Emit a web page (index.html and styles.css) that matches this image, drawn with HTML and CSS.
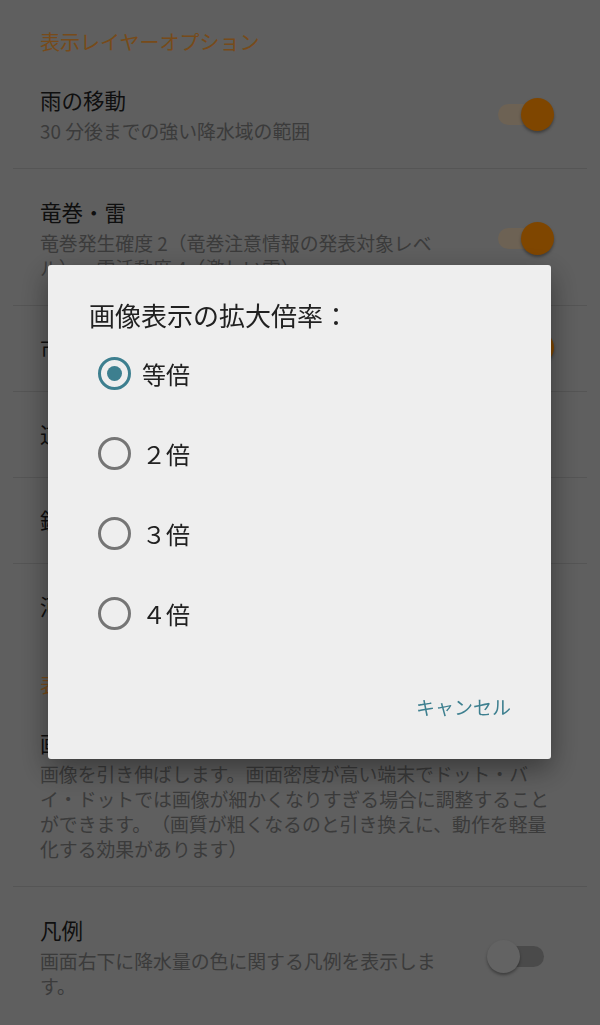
FILE: index.html
```html
<!DOCTYPE html>
<html lang="ja">

<head>
    <meta charset="UTF-8">
    <meta name="viewport" content="width=device-width, initial-scale=1.0">
    <title>表示レイヤーオプション</title>
    <link rel="stylesheet" href="styles.css">
</head>

<body>

    <div class="settings">
        <h2 class="category">表示レイヤーオプション</h2>

        <div class="pref">
            <div class="pref-text">
                <div class="pref-title">雨の移動</div>
                <div class="pref-summary">30 分後までの強い降水域の範囲</div>
            </div>
            <div class="switch on"><span class="track"></span><span class="thumb"></span></div>
        </div>

        <div class="pref">
            <div class="pref-text">
                <div class="pref-title">竜巻・雷</div>
                <div class="pref-summary">竜巻発生確度 2（竜巻注意情報の発表対象レベル）・雷活動度 4（激しい雷）</div>
            </div>
            <div class="switch on"><span class="track"></span><span class="thumb"></span></div>
        </div>

        <div class="pref single">
            <div class="pref-text">
                <div class="pref-title">市町村界</div>
            </div>
            <div class="switch on"><span class="track"></span><span class="thumb"></span></div>
        </div>

        <div class="pref single">
            <div class="pref-text">
                <div class="pref-title">道路</div>
            </div>
            <div class="switch"><span class="track"></span><span class="thumb"></span></div>
        </div>

        <div class="pref single">
            <div class="pref-text">
                <div class="pref-title">鉄道</div>
            </div>
            <div class="switch"><span class="track"></span><span class="thumb"></span></div>
        </div>

        <div class="pref single last">
            <div class="pref-text">
                <div class="pref-title">河川</div>
            </div>
            <div class="switch"><span class="track"></span><span class="thumb"></span></div>
        </div>

        <h2 class="category">表示設定</h2>

        <div class="pref">
            <div class="pref-text wide">
                <div class="pref-title">画像表示の拡大倍率</div>
                <div class="pref-summary">画像を引き伸ばします。画面密度が高い端末でドット・バイ・ドットでは画像が細かくなりすぎる場合に調整することができます。（画質が粗くなるのと引き換えに、動作を軽量化する効果があります）</div>
            </div>
        </div>

        <div class="pref last">
            <div class="pref-text">
                <div class="pref-title">凡例</div>
                <div class="pref-summary">画面右下に降水量の色に関する凡例を表示します。</div>
            </div>
            <div class="switch"><span class="track"></span><span class="thumb"></span></div>
        </div>
    </div>

    <!-- dimmed background behind the dialog -->
    <div class="scrim"></div>

    <div class="dialog">
        <div class="dialog-title">画像表示の拡大倍率：</div>
        <ul class="choices">
            <li class="choice checked"><span class="radio"></span>等倍</li>
            <li class="choice"><span class="radio"></span>２倍</li>
            <li class="choice"><span class="radio"></span>３倍</li>
            <li class="choice"><span class="radio"></span>４倍</li>
        </ul>
        <div class="dialog-buttons">
            <button type="button" class="text-button">キャンセル</button>
        </div>
    </div>

</body>

</html>
```

FILE: styles.css
```css
/* Basic styling */
body {
    margin: 0;
    background: #bebebe;
    font-family: "Noto Sans CJK JP", "Noto Sans", sans-serif;
    color: #1e1e1e;
    text-spacing-trim: space-all;
}

.settings {
    padding-top: 6px;
}

.category {
    margin: 0;
    padding: 21px 0 0 40px;
    font-size: 20px;
    font-weight: normal;
    line-height: 30px;
    color: #ee9634;
}

/* Preference rows */
.pref {
    display: flex;
    align-items: center;
    margin: 0 13px;
    padding: 28px 33px 25px 27px;
    border-bottom: 1px solid #aaaaaa;
}

.pref.single {
    padding-top: 25px;
    padding-bottom: 27px;
}

.pref.last {
    border-bottom: none;
}

.pref-text {
    width: 400px;
}

.pref-text.wide {
    width: 515px;
}

.pref-title {
    font-size: 21.5px;
    line-height: 30px;
    color: #1e1e1e;
}

.pref-summary {
    margin-top: 3px;
    font-size: 18.85px;
    line-height: 25px;
    color: #767676;
}

/* Switch */
.switch {
    position: relative;
    margin-left: auto;
    width: 67px;
    height: 33px;
    flex-shrink: 0;
}

.switch .track {
    position: absolute;
    left: 11px;
    right: 10px;
    top: 6px;
    height: 21px;
    border-radius: 11px;
    background: #949494;
}

.switch .thumb {
    position: absolute;
    left: 0;
    top: 0;
    width: 33px;
    height: 33px;
    border-radius: 50%;
    background: #c6c6c6;
    box-shadow: 0 2px 3px rgba(0, 0, 0, 0.35);
}

.switch.on .track {
    background: #dac4a8;
}

.switch.on .thumb {
    left: 34px;
    background: #ff8c00;
}

/* Modal */
.scrim {
    position: fixed;
    inset: 0;
    background: rgba(0, 0, 0, 0.5);
}

.dialog {
    position: fixed;
    left: 48px;
    top: 265px;
    width: 503px;
    padding: 33px 0 37px;
    box-sizing: border-box;
    background: #eeeeee;
    border-radius: 3px;
    box-shadow: 0 10px 28px rgba(0, 0, 0, 0.4);
}

.dialog-title {
    padding-left: 41px;
    font-size: 26px;
    line-height: 34px;
    color: #212121;
}

.choices {
    list-style: none;
    margin: 1px 0 0;
    padding: 0 0 0 50px;
}

.choice {
    display: flex;
    align-items: center;
    gap: 11px;
    height: 80px;
    font-size: 24px;
    color: #212121;
}

.radio {
    width: 27px;
    height: 27px;
    border: 3px solid #757575;
    border-radius: 50%;
    flex-shrink: 0;
    display: flex;
    align-items: center;
    justify-content: center;
}

.choice.checked .radio {
    border-color: #3d7f8f;
}

.choice.checked .radio::after {
    content: "";
    width: 15px;
    height: 15px;
    border-radius: 50%;
    background: #3d7f8f;
}

.dialog-buttons {
    display: flex;
    justify-content: flex-end;
    margin-top: 39px;
    padding-right: 40px;
}

.text-button {
    padding: 0;
    border: none;
    background: none;
    font-family: inherit;
    font-size: 19px;
    line-height: 30px;
    color: #3d7f8f;
    cursor: pointer;
}
```
